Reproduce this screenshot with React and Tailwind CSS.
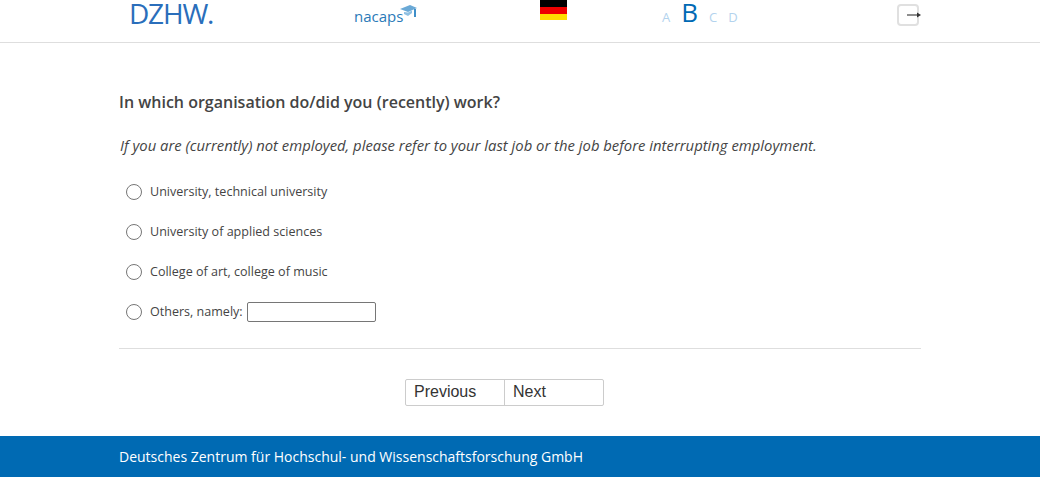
import React from 'react';

const options = [
  'University, technical university',
  'University of applied sciences',
  'College of art, college of music',
];

function Radio() {
  return <span className="w-4 h-4 rounded-full border border-[#767676] bg-white shrink-0" />;
}

function CapIcon() {
  return (
    <svg width="17" height="13" viewBox="0 0 17 13" className="absolute left-[46px] top-[-1px]">
      <path d="M0 4 L10 0 L17 3 L8 7 Z" fill="#6aa9d6" />
      <path d="M4 7 L4 9 L8 11 L12 8 L12 5.5 L8 7.5 Z" fill="#8fc0e2" />
      <path d="M15 4 L15 12" stroke="#3f8fc9" strokeWidth="2" />
    </svg>
  );
}

function ExitIcon() {
  return (
    <div className="relative w-[22px] h-[22px] rounded-[4px] border-2 border-[#e0e0e0] bg-white">
      <svg width="15" height="8" viewBox="0 0 15 8" className="absolute left-[8px] top-[4.5px]">
        <path d="M0 4 H11" stroke="#444" strokeWidth="1.2" />
        <path d="M10 1.5 L14 4 L10 6.5 Z" fill="#333" />
      </svg>
    </div>
  );
}

export default function App() {
  return (
    <div className="min-h-screen flex flex-col bg-white font-['Open_Sans',sans-serif] text-[#444]">
      <header className="h-[43px] border-b border-[#dedede] shrink-0">
        <div className="w-[802px] ml-[119px] h-[42px] flex">
          <div className="w-[235px] pl-[10px] text-[#2a6ebb] text-[28px] leading-[26px] tracking-[-1.2px]">DZHW.</div>
          <div className="w-[186px] mt-[4px]">
            <span className="relative inline-block text-[#2a7ab8] text-[15px] leading-[20px]">
              nacaps<CapIcon />
            </span>
          </div>
          <div className="w-[122px] h-[20px] flex flex-col">
            <div className="w-[27px] h-[7px] bg-black" />
            <div className="w-[27px] h-[7px] bg-[#ee0000]" />
            <div className="w-[27px] h-[6px] bg-[#ffdd00]" />
          </div>
          <div className="w-[235px] mt-[1px] flex items-baseline h-[26px] text-[#b3d3ee] text-[13px] leading-[22px]">
            <span>A</span>
            <span className="ml-[11px] text-[#0069b4] text-[26px] font-medium">B</span>
            <span className="ml-[11px]">C</span>
            <span className="ml-[11px]">D</span>
          </div>
          <div className="pt-[4px]"><ExitIcon /></div>
        </div>
      </header>

      <main className="w-[802px] ml-[119px] flex-1 flex flex-col">
        <h1 className="mt-[47px] text-[16px] leading-[24px] font-semibold">In which organisation do/did you (recently) work?</h1>
        <p className="mt-[19px] pl-[1px] text-[14.84px] leading-[24px] italic">If you are (currently) not employed, please refer to your last job or the job before interrupting employment.</p>

        <div className="mt-[15px] flex flex-col">
          {options.map(o => (
            <label key={o} className="h-[40px] flex items-center pl-[7px] gap-[8px] text-[12.56px] font-medium">
              <Radio />
              {o}
            </label>
          ))}
          <label className="h-[40px] flex items-center pl-[7px] gap-[8px] text-[12.56px] font-medium">
            <Radio />
            Others, namely:
            <input type="text" className="-ml-[4px] w-[129px] h-[20px] border border-[#767676] rounded-[2px] bg-white" />
          </label>
        </div>

        <div className="mt-[16px] border-t border-[#dedede]" />

        <div className="mt-[30px] ml-[286px] flex">
          <div className="flex h-[27px] rounded-[2px] border border-[#cccccc] font-['Liberation_Sans',sans-serif] text-[16px] leading-[22px] text-[#333]">
            <button className="w-[99px] text-left pl-[8px] pb-[2px] border-r border-[#cccccc]">Previous</button>
            <button className="w-[98px] text-left pl-[8px] pb-[2px]">Next</button>
          </div>
        </div>
      </main>

      <footer className="h-[41px] shrink-0 bg-[#006ab3] pl-[119px] flex items-center text-[14px] text-white">
        Deutsches Zentrum für Hochschul- und Wissenschaftsforschung GmbH
      </footer>
    </div>
  );
}
